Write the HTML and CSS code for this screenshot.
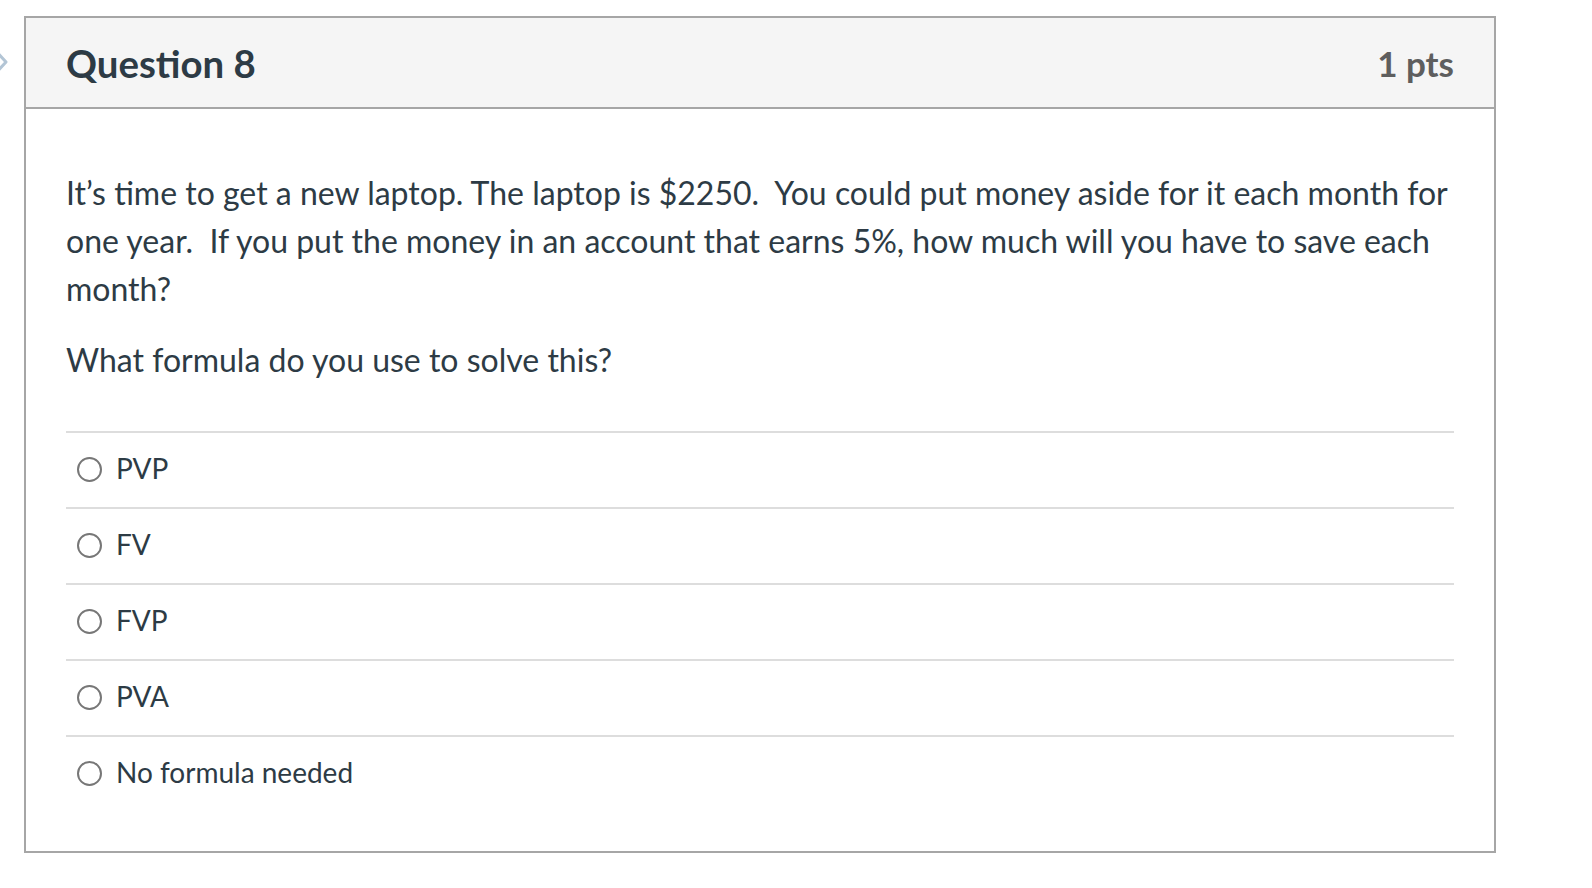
FILE: index.html
```html
<!DOCTYPE html>
<html lang="en">
<head>
<meta charset="utf-8">
<title>Question 8</title>
<link rel="stylesheet" href="styles.css">
</head>
<body>
<div class="page">
  <div class="gutter">
    <svg class="chevron" width="10" height="26" viewBox="0 0 10 26" aria-hidden="true">
      <polyline points="-5,1 6,13 -5,25" fill="none" stroke="#b3c5d5" stroke-width="3" stroke-linejoin="round"/>
    </svg>
  </div>
  <div class="card">
    <div class="card-header">
      <h2 class="title">Question 8</h2>
      <div class="points">1 pts</div>
    </div>
    <div class="card-body">
      <p class="qtext">It’s time to get a new laptop. The laptop is $2250.&nbsp; You could put money aside for it each month for one year.&nbsp; If you put the money in an account that earns 5%, how much will you have to save each month?</p>
      <p class="qtext">What formula do you use to solve this?</p>
      <div class="answers">
        <label class="answer"><span class="radio"></span><span class="label">PVP</span></label>
        <label class="answer"><span class="radio"></span><span class="label">FV</span></label>
        <label class="answer"><span class="radio"></span><span class="label">FVP</span></label>
        <label class="answer"><span class="radio"></span><span class="label">PVA</span></label>
        <label class="answer"><span class="radio"></span><span class="label">No formula needed</span></label>
      </div>
    </div>
  </div>
</div>
</body>
</html>
```

FILE: styles.css
```css
html, body {
  margin: 0;
  padding: 0;
  background: #ffffff;
}

body {
  font-family: Lato, "Open Sans", sans-serif;
  color: #2d3b45;
}

.page {
  display: flex;
  align-items: flex-start;
  padding-top: 16px;
}

.gutter {
  width: 24px;
  flex: 0 0 24px;
}

.chevron {
  display: block;
  margin-top: 33px;
}

.card {
  width: 1468px;
  border: 2px solid #a6a6a6;
  background: #ffffff;
}

.card-header {
  display: flex;
  justify-content: space-between;
  align-items: center;
  height: 89px;
  padding: 0 40px;
  background: #f5f5f5;
  border-bottom: 2px solid #a6a6a6;
}

.title {
  margin: 0;
  font-size: 38.4px;
  font-weight: 700;
  line-height: 46px;
  color: #2d3b45;
}

.points {
  font-size: 35px;
  font-weight: 700;
  line-height: 46px;
  color: #5e5e5e;
}

.card-body {
  padding: 60px 40px 40px;
}

.qtext {
  margin: 0 0 23px;
  font-size: 32px;
  line-height: 48px;
}

.qtext + .qtext {
  margin-bottom: 47px;
}

.answers {
  display: flex;
  flex-direction: column;
}

.answer {
  display: flex;
  align-items: center;
  padding: 11px 0 15px;
  border-top: 2px solid #dddddd;
  font-size: 28px;
  line-height: 48px;
}

.radio {
  box-sizing: border-box;
  width: 25px;
  height: 25px;
  margin: 3px 14px 0 11px;
  border: 2px solid #777777;
  border-radius: 50%;
  background: #ffffff;
}

.label {
  color: #2d3b45;
}
```
